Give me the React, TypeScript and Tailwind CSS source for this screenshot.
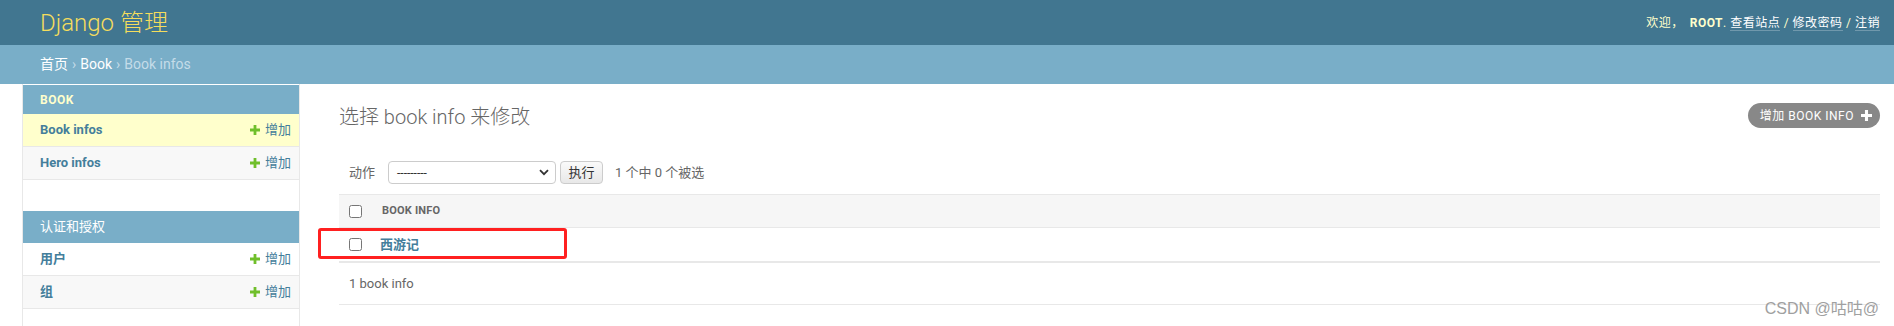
import React from 'react';

const font = { fontFamily: 'Roboto, "Noto Sans CJK SC", sans-serif' };

const PlusIcon = ({ color, size = 10 }: { color: string; size?: number }) => (
  <svg width={size} height={size} viewBox="0 0 10 10" className="shrink-0">
    <path d="M3.6 0h2.8v3.6H10v2.8H6.4V10H3.6V6.4H0V3.6h3.6z" fill={color} />
  </svg>
);

const SidebarRow = ({ label, active, grey }: { label: string; active?: boolean; grey?: boolean }) => (
  <div
    className={`flex h-[33px] items-center justify-between border-b border-[#e8e8e8] pl-[17px] pr-2 ${
      active ? 'bg-[#ffffcc]' : grey ? 'bg-[#f8f8f8]' : 'bg-white'
    }`}
  >
    <span className="text-[13px] font-bold text-[#447e9b]">{label}</span>
    <span className="flex items-center gap-[5px] text-[13px] text-[#447e9b]">
      <PlusIcon color="#70bf2b" />
      增加
    </span>
  </div>
);

export default function App() {
  return (
    <div className="relative min-h-[326px] bg-white" style={font}>
      {/* header */}
      <div className="flex h-[45px] items-center justify-between bg-[#417690] pl-10 pr-[14px]">
        <div className="text-[24px] font-light leading-none text-[#f5dd5d]">Django 管理</div>
        <div className="text-[12px] tracking-[0.5px] text-[#ffffcc]">
          欢迎，
          <strong className="ml-[6px] font-bold">ROOT</strong>.{' '}
          <span className="border-b border-white/25 text-white">查看站点</span>
          <span className="text-[#ffffcc]"> / </span>
          <span className="border-b border-white/25 text-white">修改密码</span>
          <span className="text-[#ffffcc]"> / </span>
          <span className="border-b border-white/25 text-white">注销</span>
        </div>
      </div>

      {/* breadcrumbs */}
      <div className="flex h-[39px] items-center bg-[#79aec8] pl-10 text-[14px] text-[#c4dce8]">
        <span className="text-white">首页</span>
        <span className="mx-[4px]">›</span>
        <span className="text-white">Book</span>
        <span className="mx-[4px]">›</span>
        <span>Book infos</span>
      </div>

      <div className="flex">
        {/* sidebar */}
        <div className="ml-[22px] w-[278px] shrink-0 border-l border-r border-[#e8e8e8] pt-px pb-[18px]">
          <div className="flex h-[30px] items-center bg-[#79aec8] pl-[17px] text-[12px] font-bold tracking-[0.5px] text-[#ffffcc]">
            BOOK
          </div>
          <div className="-mt-px">
            <SidebarRow label="Book infos" active />
            <SidebarRow label="Hero infos" grey />
          </div>
          <div className="h-[31px]" />
          <div className="flex h-[32px] items-center bg-[#79aec8] pl-[17px] text-[13px] text-white">
            认证和授权
          </div>
          <SidebarRow label="用户" />
          <SidebarRow label="组" grey />
        </div>

        {/* main */}
        <div className="relative flex-1 pl-[39px] pr-[14px]">
          <div className="mt-[19px] flex h-[25px] items-center justify-between">
            <h1 className="pt-[3px] text-[20px] font-light text-[#666]">选择 book info 来修改</h1>
            <div className="flex h-[25px] items-center gap-[7px] rounded-full bg-[#888] pl-[12px] pr-[8px] text-[12px] tracking-[0.5px] text-white">
              增加 BOOK INFO
              <PlusIcon color="#ffffff" size={11} />
            </div>
          </div>

          <div className="mt-[23px] flex items-center px-[10px] py-[10px] text-[13px] text-[#666]">
            <span>动作</span>
            <div className="ml-[13px] flex h-[23px] w-[168px] items-center justify-between rounded-[4px] border border-[#ccc] bg-white pl-[8px] pr-[6px] text-[12px] text-[#333]">
              <span>---------</span>
              <svg width="10" height="7" viewBox="0 0 10 7">
                <path d="M1 1.2l4 4 4-4" stroke="#333" strokeWidth="1.8" fill="none" />
              </svg>
            </div>
            <div className="ml-[4px] flex h-[23px] w-[43px] items-center justify-center rounded-[4px] border border-[#ccc] bg-gradient-to-b from-[#fafafa] to-[#e8e8e8] text-[13px] text-[#333]">
              执行
            </div>
            <span className="ml-[12px]">1 个中 0 个被选</span>
          </div>

          {/* table */}
          <div className="flex h-[34px] items-center border-y border-[#e8e8e8] bg-[#f6f6f6] pl-[10px]">
            <input type="checkbox" className="m-0 h-[13px] w-[13px]" readOnly />
            <span className="ml-[20px] pt-px text-[11px] font-bold tracking-[0.2px] text-[#666]">BOOK INFO</span>
          </div>
          <div className="flex h-[35px] items-center border-b-2 border-[#e8e8e8] pl-[10px]">
            <input type="checkbox" className="m-0 h-[13px] w-[13px]" readOnly />
            <span className="ml-[18px] text-[13px] font-bold text-[#447e9b]">西游记</span>
          </div>
          <div className="flex h-[42px] items-center border-b border-[#e8e8e8] pl-[10px] text-[13px] text-[#666]">
            1 book info
          </div>

          {/* annotation */}
          <div className="absolute left-[18px] top-[144px] h-[31px] w-[249px] rounded-[3px] border-[3px] border-[#ff2020]" />
        </div>
      </div>

      {/* watermark */}
      <div
        className="absolute right-[15px] top-[297px] text-[16px] text-[#a0a0a0]"
        style={{ fontFamily: '"Liberation Sans", "Noto Sans CJK SC", sans-serif' }}
      >
        CSDN @咕咕@
      </div>
    </div>
  );
}
